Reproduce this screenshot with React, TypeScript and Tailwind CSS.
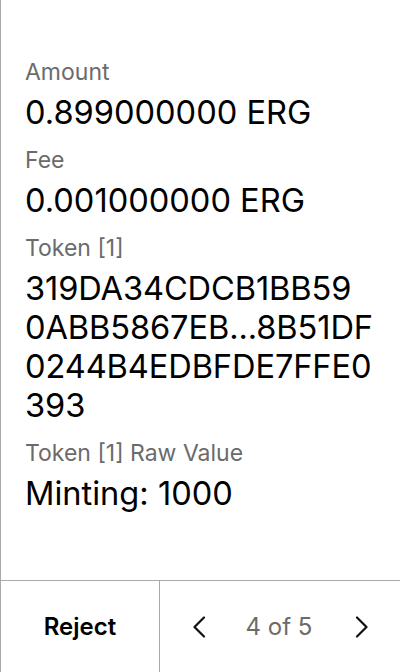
import React from 'react';

const Field = ({ label, children }: { label: string; children: React.ReactNode }) => (
  <div className="mb-[14px]">
    <p className="text-[23px] leading-[28px] text-[#6b6b6b]">{label}</p>
    <div className="mt-[7px] text-[32.6px] leading-[39px] text-black break-all">{children}</div>
  </div>
);

const Chevron = ({ dir }: { dir: 'left' | 'right' }) => (
  <svg width="14" height="22" viewBox="0 0 14 22" fill="none" stroke="#111" strokeWidth="2.2" strokeLinecap="round" strokeLinejoin="round">
    {dir === 'left' ? <path d="M12 1.5 2.5 11l9.5 9.5" /> : <path d="M2 1.5 11.5 11 2 20.5" />}
  </svg>
);

// token id as the wallet wraps it
const tokenLines = ['319DA34CDCB1BB59', '0ABB5867EB...8B51DF', '0244B4EDBFDE7FFE0', '393'];

export default function App() {
  return (
    <div className="w-[400px] h-[672px] bg-white border-l border-[#aaaaaa] flex flex-col" style={{ fontFamily: 'Inter, "Noto Sans", sans-serif' }}>
      <div className="flex-1 pt-[58px] pl-[24px] pr-[29px]">
        <Field label="Amount">0.899000000 ERG</Field>
        <Field label="Fee">0.001000000 ERG</Field>
        <Field label="Token [1]">
          {tokenLines.map((line) => (
            <div key={line} className="whitespace-nowrap tracking-[-0.1px]">{line}</div>
          ))}
        </Field>
        <Field label="Token [1] Raw Value">Minting: 1000</Field>
      </div>
      <div className="h-[92px] border-t border-[#aaaaaa] flex">
        <button className="w-[159px] border-r border-[#aaaaaa] flex items-center justify-center text-[24px] font-semibold text-black">
          Reject
        </button>
        <div className="flex-1 flex items-center justify-between pl-[32px] pr-[31px]">
          <Chevron dir="left" />
          <span className="mr-[3px] text-[24px] text-[#6b6b6b]">4 of 5</span>
          <Chevron dir="right" />
        </div>
      </div>
    </div>
  );
}
